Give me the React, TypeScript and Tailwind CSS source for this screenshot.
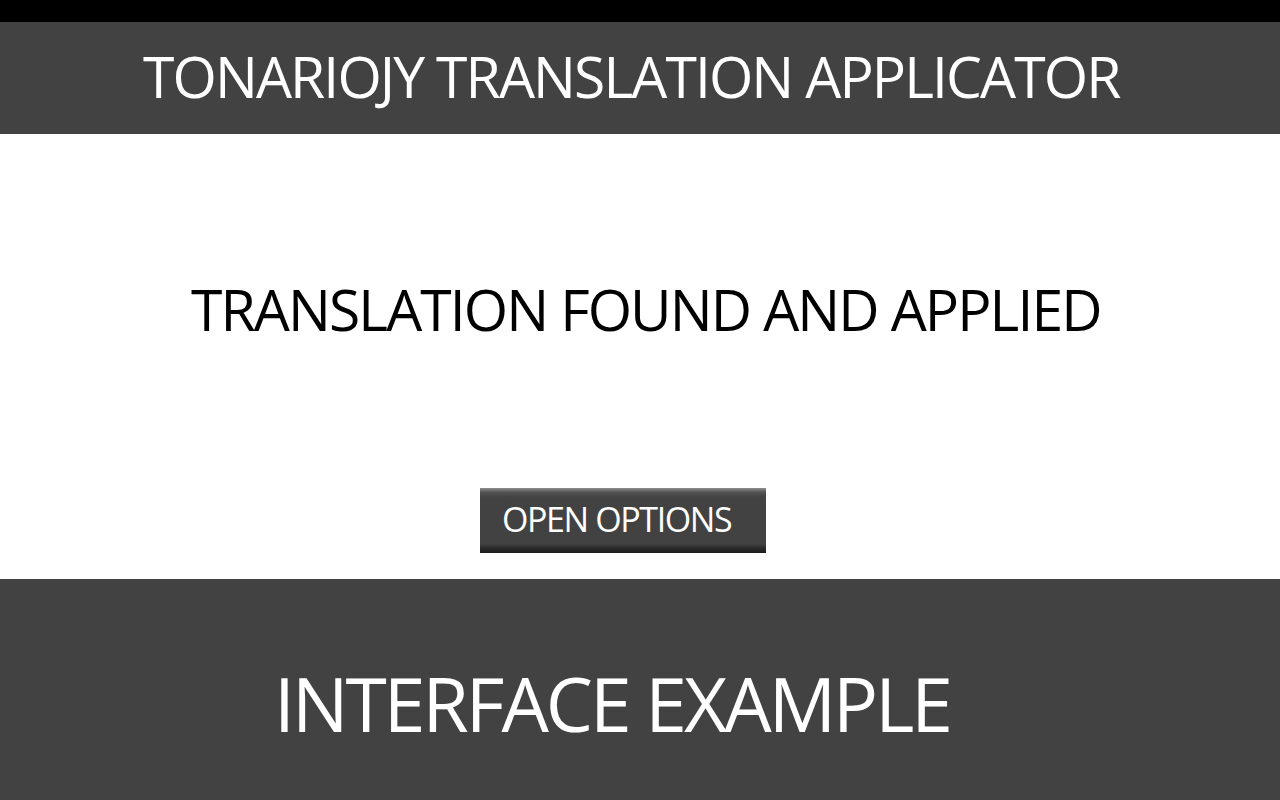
export default function App() {
  return (
    <div className="w-[1280px] h-[800px] flex flex-col bg-white overflow-hidden" style={{ fontFamily: '"Open Sans", "Noto Sans", sans-serif' }}>
      <div className="h-[22px] bg-black shrink-0" />
      <header className="h-[112px] bg-[#424242] shrink-0 flex items-center pb-[4px]">
        <h1 className="ml-[143px] text-white text-[57px] tracking-[-1.9px] leading-none whitespace-nowrap">TONARIOJY TRANSLATION APPLICATOR</h1>
      </header>
      <main className="h-[445px] shrink-0 flex flex-col">
        <p className="mt-[147px] ml-[191px] text-black text-[57px] tracking-[-1.9px] leading-none whitespace-nowrap">TRANSLATION FOUND AND APPLIED</p>
        <button className="mt-[150px] ml-[480px] w-[286px] h-[65px] flex items-center pl-[22px] pb-[4px] text-white text-[34px] tracking-[-1.4px] leading-none whitespace-nowrap [background:linear-gradient(to_bottom,#909090_0px,#555555_4px,#424242_9px,#424242_56px,#2a2a2a_60px,#1c1c1c_65px)]">
          OPEN OPTIONS
        </button>
      </main>
      <footer className="flex-1 bg-[#424242] flex items-center pt-[28px]">
        <h2 className="ml-[274px] text-white text-[75px] tracking-[-3px] leading-none whitespace-nowrap">INTERFACE EXAMPLE</h2>
      </footer>
    </div>
  );
}
